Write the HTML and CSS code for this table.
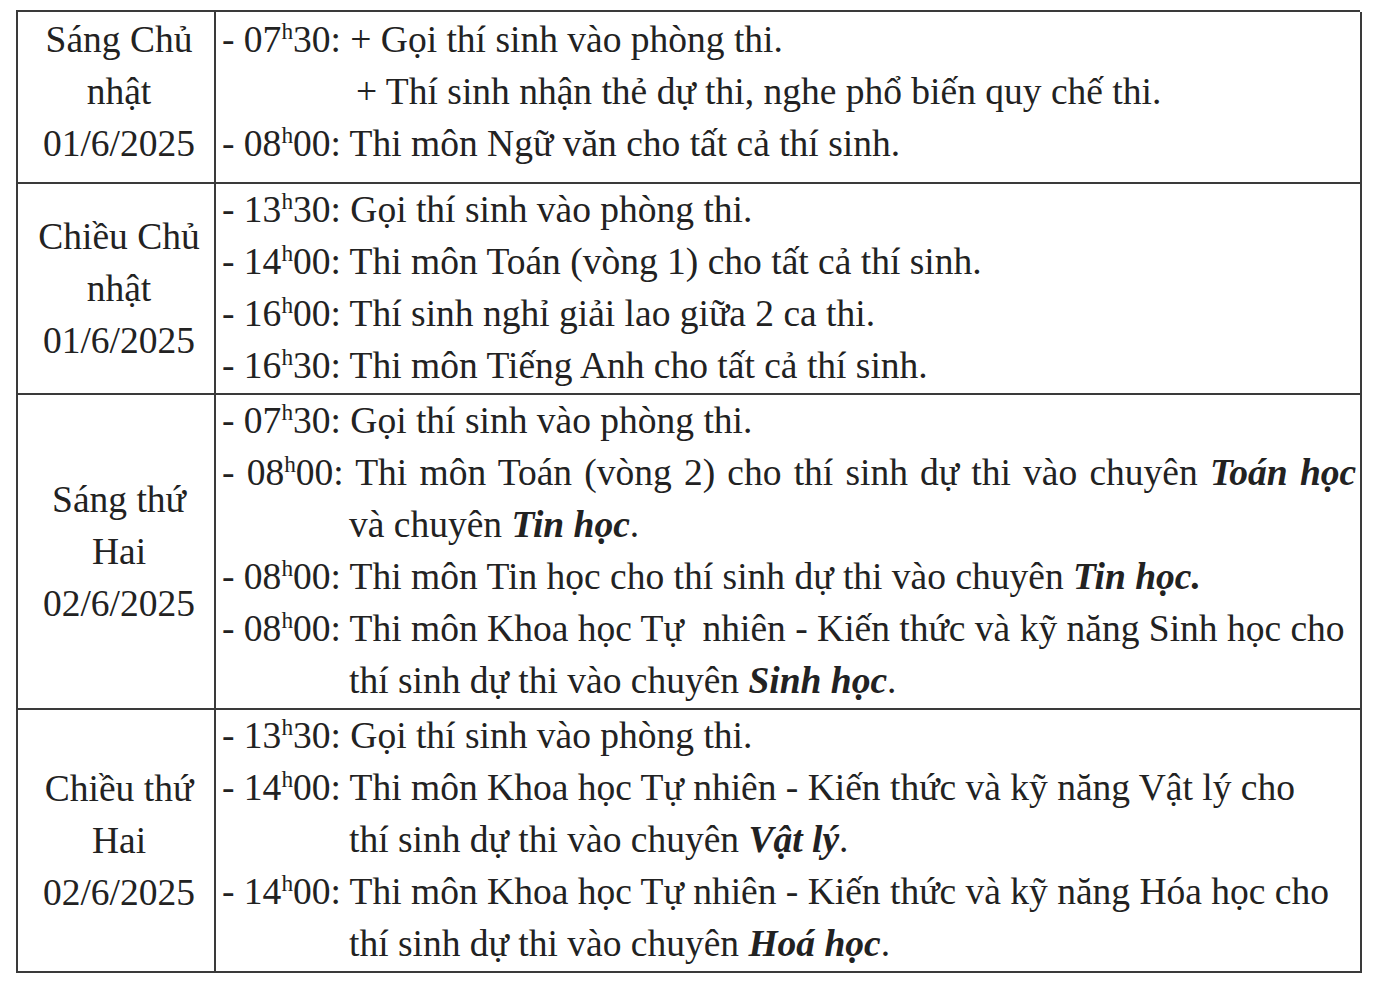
FILE: index.html
```html
<!DOCTYPE html>
<html lang="vi">
<head>
<meta charset="utf-8">
<title>Lịch thi</title>
<link rel="stylesheet" href="styles.css">
</head>
<body>
<div class="sheet">
  <div class="grid">
    <div class="day r1"><div>Sáng Chủ</div><div>nhật</div><div>01/6/2025</div></div>
    <div class="items r1">
      <div class="ln">- 07<sup>h</sup>30: + Gọi thí sinh vào phòng thi.</div>
      <div class="ln plus">+ Thí sinh nhận thẻ dự thi, nghe phổ biến quy chế thi.</div>
      <div class="ln">- 08<sup>h</sup>00: Thi môn Ngữ văn cho tất cả thí sinh.</div>
    </div>

    <div class="day r2"><div>Chiều Chủ</div><div>nhật</div><div>01/6/2025</div></div>
    <div class="items r2">
      <div class="ln">- 13<sup>h</sup>30: Gọi thí sinh vào phòng thi.</div>
      <div class="ln">- 14<sup>h</sup>00: Thi môn Toán (vòng 1) cho tất cả thí sinh.</div>
      <div class="ln">- 16<sup>h</sup>00: Thí sinh nghỉ giải lao giữa 2 ca thi.</div>
      <div class="ln">- 16<sup>h</sup>30: Thi môn Tiếng Anh cho tất cả thí sinh.</div>
    </div>

    <div class="day r3"><div>Sáng thứ</div><div>Hai</div><div>02/6/2025</div></div>
    <div class="items r3">
      <div class="ln">- 07<sup>h</sup>30: Gọi thí sinh vào phòng thi.</div>
      <div class="ln wide">- 08<sup>h</sup>00: Thi môn Toán (vòng 2) cho thí sinh dự thi vào chuyên <b><i>Toán học</i></b></div>
      <div class="ln cont">và chuyên <b><i>Tin học</i></b>.</div>
      <div class="ln">- 08<sup>h</sup>00: Thi môn Tin học cho thí sinh dự thi vào chuyên <b><i>Tin học.</i></b></div>
      <div class="ln">- 08<sup>h</sup>00: Thi môn Khoa học Tự&nbsp; nhiên - Kiến thức và kỹ năng Sinh học cho</div>
      <div class="ln cont">thí sinh dự thi vào chuyên <b><i>Sinh học</i></b>.</div>
    </div>

    <div class="day r4"><div>Chiều thứ</div><div>Hai</div><div>02/6/2025</div></div>
    <div class="items r4">
      <div class="ln">- 13<sup>h</sup>30: Gọi thí sinh vào phòng thi.</div>
      <div class="ln">- 14<sup>h</sup>00: Thi môn Khoa học Tự nhiên - Kiến thức và kỹ năng Vật lý cho</div>
      <div class="ln cont">thí sinh dự thi vào chuyên <b><i>Vật lý</i></b>.</div>
      <div class="ln">- 14<sup>h</sup>00: Thi môn Khoa học Tự nhiên - Kiến thức và kỹ năng Hóa học cho</div>
      <div class="ln cont">thí sinh dự thi vào chuyên <b><i>Hoá học</i></b>.</div>
    </div>
  </div>
</div>
</body>
</html>
```
FILE: styles.css
```css
html, body {
  margin: 0;
  padding: 0;
  background: #ffffff;
}
body {
  font-family: "Liberation Serif", "Times New Roman", serif;
  color: #222222;
  font-size: 37.5px;
  line-height: 52px;
}
.sheet {
  padding: 10px 0 0 16px;
}
.grid {
  display: grid;
  grid-template-columns: 198px 1146px;
  grid-template-rows: 172px 211px 315px 263px;
  width: 1344px;
  border-top: 2px solid #3a3a3a;
  border-left: 2px solid #3a3a3a;
  box-sizing: border-box;
}
.day, .items {
  border-right: 2px solid #3a3a3a;
  border-bottom: 2px solid #3a3a3a;
  box-sizing: border-box;
  overflow: visible;
}
.day {
  display: flex;
  flex-direction: column;
  justify-content: center;
  align-items: center;
  text-align: center;
  padding-left: 6px;
}
.day.r1 {
  justify-content: flex-start;
  padding-top: 2px;
}
.items {
  padding: 0 0 0 6px;
}
.items.r1 {
  padding-top: 2px;
}
.ln {
  white-space: nowrap;
}
.ln.wide {
  word-spacing: 2.8px;
}
.ln.plus {
  padding-left: 134px;
}
.ln.cont {
  padding-left: 127px;
}
sup {
  font-size: 0.62em;
  line-height: 0;
  vertical-align: 0.55em;
}
b i, i b {
  font-weight: bold;
  font-style: italic;
}
```
